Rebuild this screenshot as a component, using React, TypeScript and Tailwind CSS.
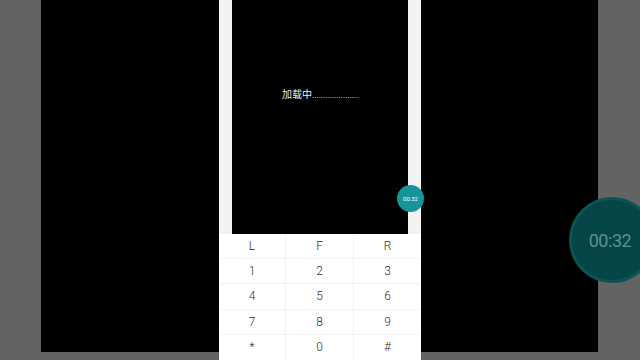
import React from 'react';

const keys = ['L', 'F', 'R', '1', '2', '3', '4', '5', '6', '7', '8', '9', '*', '0', '#'];

const Keypad: React.FC = () => (
    <div className="grid grid-cols-[67px_68px_67px] grid-rows-5 h-[126px] bg-white">
        {keys.map((k, i) => (
            <div
                key={k}
                className={`flex items-center justify-center text-[12px] font-light text-[#2f2f2f] border-[#f3f3f3] ${i < 12 ? 'border-b' : ''} ${i % 3 !== 2 ? 'border-r' : ''}`}
            >
                {k}
            </div>
        ))}
    </div>
);

const App: React.FC = () => {
    return (
        <div className="relative w-[640px] h-[360px] overflow-hidden bg-[#636363]" style={{ fontFamily: 'Roboto, "Noto Sans CJK SC", sans-serif' }}>
            {/* blurred backdrop */}
            <div className="flex pl-[41px]">
                <div className="w-[557px] h-[352px] bg-black" />
            </div>
            <div className="absolute left-[569px] top-[197px] w-[86px] h-[86px] rounded-full bg-[#064545] border-[3px] border-[#0c5454] flex items-center justify-center">
                <span className="text-[18px] text-[#5e9090] -ml-[4px] tracking-tight">00:32</span>
            </div>

            {/* phone */}
            <div className="absolute left-[219px] top-0 w-[202px] h-[360px] flex flex-col">
                <div className="h-[234px] bg-[#f2f2f2] px-[13px] flex">
                    <div className="flex-1 bg-black pt-[88px] pl-[50px]">
                        <p className="text-[#eeeeee] text-[10px] leading-[14px] h-[14px] whitespace-nowrap">
                            加载中<span className="text-[8px] tracking-[0.1px]">.....................</span>
                        </p>
                    </div>
                </div>
                <Keypad />
            </div>
            <div className="absolute left-[397px] top-[185px] w-[27px] h-[27px] rounded-full bg-[#17939a] flex items-center justify-center">
                <span className="text-[6px] text-white">00:32</span>
            </div>
        </div>
    );
};

export default App;
